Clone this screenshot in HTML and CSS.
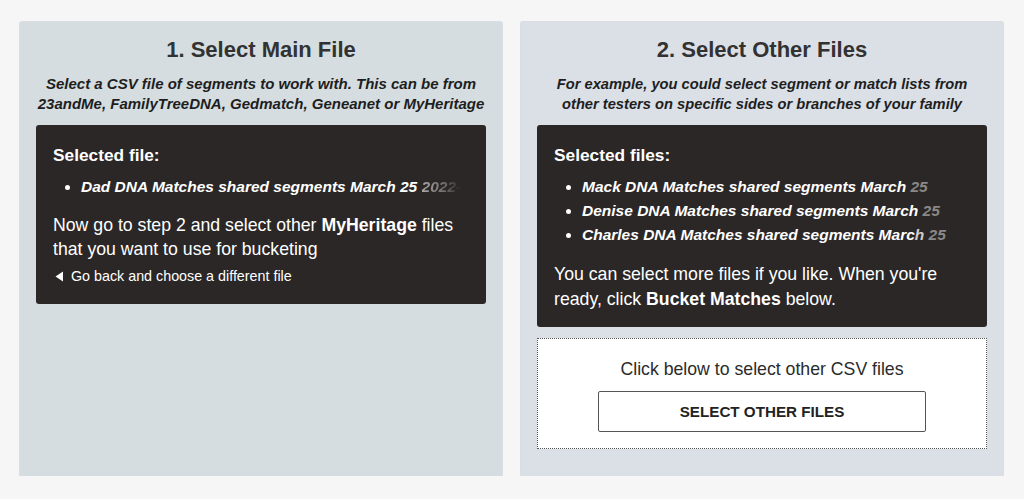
FILE: index.html
```html
<!DOCTYPE html>
<html lang="en">
<head>
<meta charset="utf-8">
<title>Select files</title>
<link rel="stylesheet" href="styles.css">
</head>
<body>
<main class="steps">
  <section class="panel panel-main">
    <h2 class="panel-title">1. Select Main File</h2>
    <p class="panel-sub panel-sub-wide">Select a CSV file of segments to work with. This can be from 23andMe, FamilyTreeDNA, Gedmatch, Geneanet or MyHeritage</p>
    <div class="dark-box dark-box-main">
      <h3 class="box-title">Selected file:</h3>
      <ul class="file-list">
        <li>Dad DNA Matches shared segments March 25 <span class="fade fade-long">2022-</span></li>
      </ul>
      <p class="box-text">Now go to step 2 and select other <b>MyHeritage</b> files that you want to use for bucketing</p>
      <a class="back-link" href="#"><svg class="back-icon" width="9" height="11" viewBox="0 0 9 11"><path d="M8 0.5 L8 10.5 L0.5 5.5 Z" fill="#fff"/></svg>Go back and choose a different file</a>
    </div>
  </section>
  <section class="panel panel-other">
    <h2 class="panel-title">2. Select Other Files</h2>
    <p class="panel-sub panel-sub-narrow">For example, you could select segment or match lists from other testers on specific sides or branches of your family</p>
    <div class="dark-box dark-box-other">
      <h3 class="box-title">Selected files:</h3>
      <ul class="file-list">
        <li>Mack DNA Matches shared segments March <span class="fade">25</span></li>
        <li>Denise DNA Matches shared segments March <span class="fade">25</span></li>
        <li>Charles DNA Matches shared segments Marc<span class="fade-soft">h</span> <span class="fade">25</span></li>
      </ul>
      <p class="box-text box-text-right">You can select more files if you like. When you're ready, click <b>Bucket Matches</b> below.</p>
    </div>
    <div class="drop-zone">
      <p class="drop-text">Click below to select other CSV files</p>
      <button class="select-btn" type="button">SELECT OTHER FILES</button>
    </div>
  </section>
</main>
</body>
</html>
```

FILE: styles.css
```css
html, body {
  margin: 0;
  padding: 0;
}
body {
  background: #f6f6f6;
  font-family: "Liberation Sans", Arial, Helvetica, sans-serif;
  color: #2f2f2f;
}
.steps {
  display: grid;
  grid-template-columns: 482px 482px;
  column-gap: 19px;
  padding: 22px 21px 0 20px;
  align-items: stretch;
}
.panel {
  border-radius: 2px;
  padding: 0 16px 27px 16px;
  box-shadow: 0 0 0 1px rgba(190, 198, 205, 0.5);
}
.panel-main {
  background: #d5dde0;
}
.panel-other {
  background: #dbdfe6;
}
.panel-title {
  margin: 14px 0 0;
  font-size: 22px;
  line-height: 28px;
  font-weight: bold;
  text-align: center;
  color: #323232;
}
.panel-sub {
  margin: 10px 0 0;
  font-size: 14.7px;
  line-height: 20px;
  font-style: italic;
  font-weight: bold;
  text-align: center;
  color: #1e1e1e;
}
.panel-sub-wide {
  font-size: 15px;
}
.panel-sub-narrow {
  padding: 0 12px;
}
.dark-box {
  margin-top: 11px;
  background: #2b2727;
  border-radius: 3px;
  padding: 18px 17px 14px 17px;
  color: #ffffff;
}
.dark-box-main {
  padding-bottom: 18px;
}
.dark-box-other {
  padding-bottom: 15px;
}
.box-title {
  margin: 0;
  font-size: 17.3px;
  line-height: 24px;
  font-weight: bold;
}
.file-list {
  margin: 8px 0 0;
  padding: 0 0 0 28px;
  font-size: 15.5px;
  line-height: 24px;
  font-style: italic;
  font-weight: bold;
  white-space: nowrap;
}
.fade {
  color: #8a8786;
}
.fade-soft {
  color: #cfcdcd;
}
.fade-long {
  background: linear-gradient(90deg, #a9a6a6 0%, #6d6a6a 60%, #2b2727 100%);
  -webkit-background-clip: text;
  background-clip: text;
  color: transparent;
}
.box-text {
  margin: 14px 0 0;
  font-size: 17.7px;
  line-height: 24px;
}
.box-text-right {
  margin-top: 15px;
  line-height: 25px;
}
.box-text b {
  font-weight: bold;
}
.back-link {
  display: flex;
  align-items: center;
  gap: 7px;
  margin-top: 5px;
  color: #ffffff;
  text-decoration: none;
  font-size: 14.3px;
  line-height: 20px;
}
.back-icon {
  display: block;
  margin-left: 2px;
}
.drop-zone {
  margin-top: 11px;
  background: #ffffff;
  border: 1px dotted #555555;
  padding: 18px 0 16px;
  display: flex;
  flex-direction: column;
  align-items: center;
}
.drop-text {
  margin: 0;
  font-size: 17.7px;
  line-height: 24px;
  color: #2b2b2b;
}
.select-btn {
  margin-top: 10px;
  width: 328px;
  height: 41px;
  background: #ffffff;
  border: 1px solid #555555;
  border-radius: 2px;
  font-family: "Liberation Sans", Arial, Helvetica, sans-serif;
  font-size: 15.2px;
  font-weight: bold;
  color: #222222;
  letter-spacing: 0;
}
```
